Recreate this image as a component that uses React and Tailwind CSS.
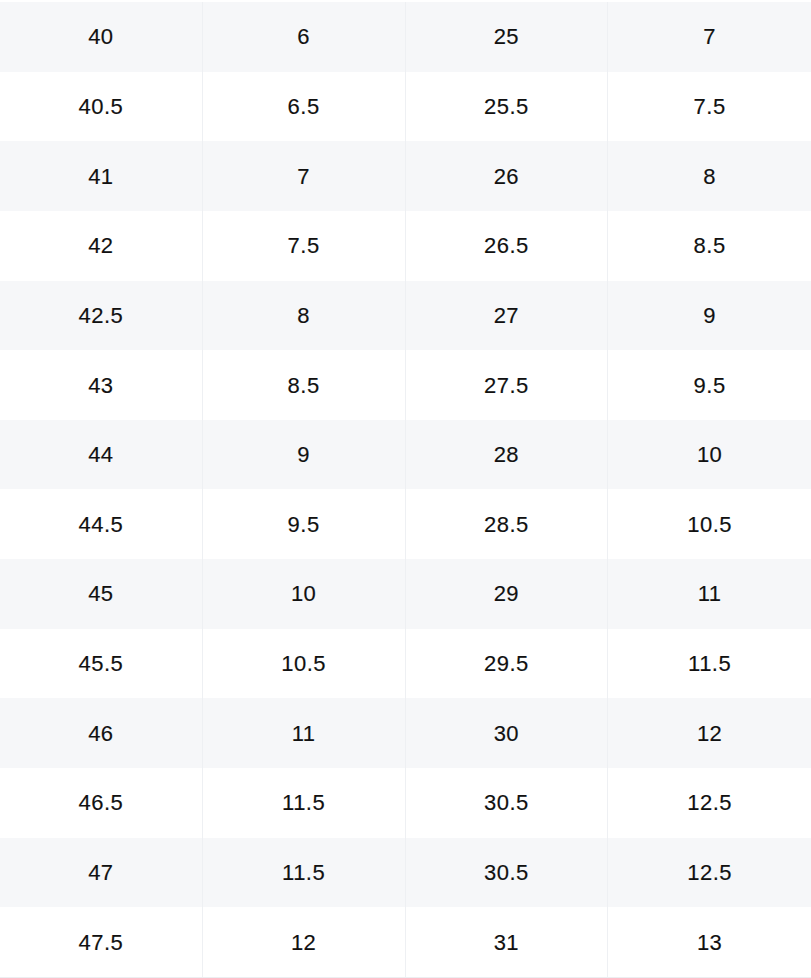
const rows = [
  ["40", "6", "25", "7"],
  ["40.5", "6.5", "25.5", "7.5"],
  ["41", "7", "26", "8"],
  ["42", "7.5", "26.5", "8.5"],
  ["42.5", "8", "27", "9"],
  ["43", "8.5", "27.5", "9.5"],
  ["44", "9", "28", "10"],
  ["44.5", "9.5", "28.5", "10.5"],
  ["45", "10", "29", "11"],
  ["45.5", "10.5", "29.5", "11.5"],
  ["46", "11", "30", "12"],
  ["46.5", "11.5", "30.5", "12.5"],
  ["47", "11.5", "30.5", "12.5"],
  ["47.5", "12", "31", "13"],
];

export default function App() {
  return (
    <div className="w-[811px] h-[978px] flex flex-col bg-white pt-[2px] font-['Liberation_Sans',Arial,sans-serif] text-[22px] text-[#111] [-webkit-text-stroke:0.15px_#111] border-b border-[#eceef1]">
      {rows.map((row, i) => (
        <div
          key={i}
          className={"flex-1 grid grid-cols-4 " + (i % 2 === 0 ? "bg-[#f6f7f9]" : "bg-white")}
        >
          {row.map((cell, j) => (
            <div
              key={j}
              className={"flex items-center justify-center tracking-[0.5px] " + (j < 3 ? "border-r border-[#eef0f3]" : "")}
            >
              {cell}
            </div>
          ))}
        </div>
      ))}
    </div>
  );
}
